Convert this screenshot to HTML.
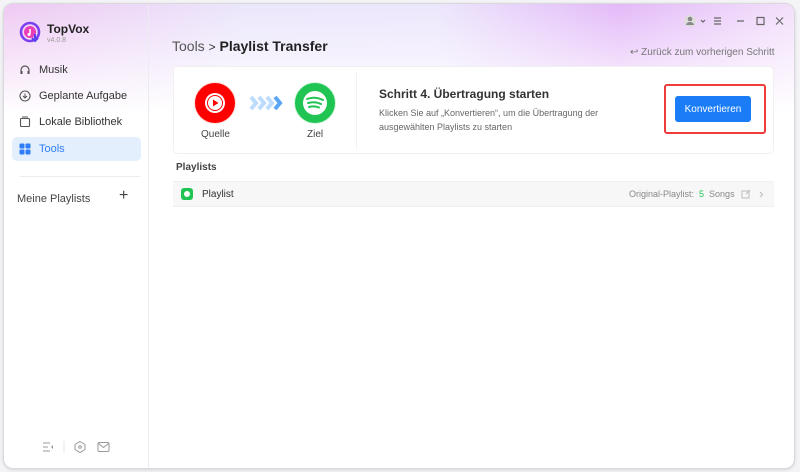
<!DOCTYPE html>
<html><head><meta charset="utf-8"><style>
*{box-sizing:border-box;margin:0;padding:0}
body{width:800px;height:472px;background:#f4f4f6;font-family:"Liberation Sans",Arial,sans-serif;position:relative;overflow:hidden}
.win{position:absolute;left:3px;top:3px;width:792px;height:466px;border-radius:10px;background:#fff;overflow:hidden;border:1px solid #d8d8de;box-shadow:0 1px 3px rgba(0,0,0,.12)}
.grad{position:absolute;left:0;top:0;width:100%;height:110px;background:linear-gradient(180deg,rgba(255,255,255,0) 0%,#fff 100%),linear-gradient(90deg,#efc9f3 0%,#ebe6fb 30%,#ece6fc 55%,#e3b9f8 78%,#f3e0fb 100%)}
.side{position:absolute;left:0;top:0;width:145px;height:100%;border-right:1px solid #ececf0}
.abs{position:absolute}
.nav{position:absolute;left:8px;width:129px;height:24px;font-size:11px;color:#333;display:flex;align-items:center;padding-left:7px}
.nav svg{margin-right:8px}
</style></head><body>
<div class="win">
<div class="grad"></div>
<div class="side">
 <svg class="abs" style="left:15px;top:16px" width="24" height="26" viewBox="0 0 24 26"><circle cx="11" cy="12" r="9" fill="none" stroke="#7b3ff2" stroke-width="2.6"/><circle cx="11" cy="12" r="6" fill="#e83fb8"/><path d="M11 9v5" stroke="#fff" stroke-width="1.5"/><circle cx="10" cy="14.5" r="1.5" fill="#fff"/><path d="M16 14v7m-3-3l3 3 3-3" stroke="#5b3ff2" stroke-width="2" fill="none"/></svg>
 <div class="abs" style="left:43px;top:18px;font-size:12px;font-weight:bold;color:#222">TopVox</div>
 <div class="abs" style="left:43px;top:33px;font-size:7px;color:#999">v4.0.8</div>
 <div class="nav" style="top:54px"><svg width="12" height="12" viewBox="0 0 12 12"><path d="M2 9V6a4 4 0 018 0v3" fill="none" stroke="#555" stroke-width="1.2"/><rect x="1.5" y="7" width="2" height="3" fill="#555"/><rect x="8.5" y="7" width="2" height="3" fill="#555"/></svg>Musik</div>
 <div class="nav" style="top:80px"><svg width="12" height="12" viewBox="0 0 12 12"><circle cx="6" cy="6" r="5" fill="none" stroke="#555" stroke-width="1.1"/><path d="M6 3.5v4M4 6l2 2 2-2" fill="none" stroke="#555" stroke-width="1"/></svg>Geplante Aufgabe</div>
 <div class="nav" style="top:106px"><svg width="12" height="12" viewBox="0 0 12 12"><rect x="1.5" y="2.5" width="9" height="8" rx="1" fill="none" stroke="#555" stroke-width="1.1"/><path d="M3 1h6" stroke="#555"/></svg>Lokale Bibliothek</div>
 <div class="nav" style="top:133px;background:#e3effd;border-radius:5px;color:#2f7df6"><svg width="12" height="12" viewBox="0 0 12 12" fill="#2f7df6"><rect x="0.5" y="0.5" width="5" height="5" rx="1"/><rect x="6.5" y="0.5" width="5" height="5" rx="1"/><rect x="0.5" y="6.5" width="5" height="5" rx="1"/><rect x="6.5" y="6.5" width="5" height="5" rx="1"/></svg>Tools</div>
 <div class="abs" style="left:16px;top:172px;width:120px;height:1px;background:#ececf0"></div>
 <div class="abs" style="left:13px;top:189px;font-size:11px;color:#444">Meine Playlists</div>
 <div class="abs" style="left:115px;top:183px;font-size:16px;color:#444">+</div>
 <svg class="abs" style="left:38px;top:436px" width="70" height="14" viewBox="0 0 70 14"><path d="M1 3h7M1 7h5M1 11h7" stroke="#999" stroke-width="1"/><path d="M11 5l-2 2 2 2z" fill="#999"/><path d="M22 1v12" stroke="#e5e5e5"/><path d="M38 1.5l5 3v5l-5 3-5-3v-5z" fill="none" stroke="#999" stroke-width="1"/><circle cx="38" cy="7" r="1.3" fill="none" stroke="#999"/><rect x="56" y="2.5" width="11" height="9" rx="1.5" fill="none" stroke="#999"/><path d="M56.5 3.5l5 4 5-4" fill="none" stroke="#999"/></svg>
</div>
<div class="abs" style="left:168px;top:34px;font-size:14px;color:#555">Tools <span style="color:#333;font-size:12px">&gt;</span> <b style="color:#222">Playlist Transfer</b></div>
<svg class="abs" style="left:680px;top:10px" width="106" height="14" viewBox="0 0 106 14"><circle cx="6" cy="7" r="6" fill="#ddd"/><circle cx="6" cy="5" r="2.3" fill="#888"/><path d="M2 11a4 3 0 018 0z" fill="#888"/><path d="M17 6l2 2 2-2M30 4h7M30 7h7M30 10h7M53 7h7M73 3.5h7v7h-7zM92 3.5l7 7M99 3.5l-7 7" fill="none" stroke="#666" stroke-width="1.2"/></svg>
<div class="abs" style="left:626px;top:43px;font-size:10px;color:#777">↩ Zurück zum vorherigen Schritt</div>
<div class="abs" style="left:169px;top:62px;width:601px;height:88px;border:1px solid #f0f0f3;border-radius:5px;background:#fff"></div>
<div class="abs" style="left:352px;top:69px;width:1px;height:76px;background:#f0f0f3"></div>
<svg class="abs" style="left:190px;top:78px" width="150" height="46" viewBox="0 0 150 46"><circle cx="21" cy="21" r="20.5" fill="#f00" stroke="#fdd" stroke-width="1"/><circle cx="21" cy="21" r="10" fill="#fff"/><circle cx="21" cy="21" r="7.5" fill="none" stroke="#f00" stroke-width="1"/><path d="M19 17.5v7l5.5-3.5z" fill="#f00"/><path d="M57 15l5 6-5 6M65 15l5 6-5 6M73 15l5 6-5 6" fill="none" stroke-width="4" stroke="#bcdcfb"/><path d="M81 15l5 6-5 6" fill="none" stroke-width="4" stroke="#5aa5f5"/><circle cx="121" cy="21" r="20.5" fill="#1fc452" stroke="#d7f5df"/><circle cx="121" cy="21" r="12" fill="#fff"/><path d="M113 17q8-3 16 1M114 21q7-2 13 1M115 25q5-1.5 10 0.5" fill="none" stroke="#1fc452" stroke-width="2" stroke-linecap="round"/></svg>
<div class="abs" style="left:197px;top:125px;font-size:10px;color:#444">Quelle</div>
<div class="abs" style="left:303px;top:125px;font-size:10px;color:#444">Ziel</div>
<div class="abs" style="left:375px;top:83px;font-size:12px;font-weight:bold;color:#333">Schritt 4. Übertragung starten</div>
<div class="abs" style="left:375px;top:102px;font-size:9px;color:#666;line-height:14px">Klicken Sie auf „Konvertieren“, um die Übertragung der<br>ausgewählten Playlists zu starten</div>
<div class="abs" style="left:660px;top:80px;width:102px;height:50px;border:2px solid #ee3b3b;border-radius:3px"></div>
<div class="abs" style="left:671px;top:92px;width:76px;height:26px;background:#1a7df7;border-radius:3px;color:#fff;font-size:10px;display:flex;align-items:center;justify-content:center">Konvertieren</div>
<div class="abs" style="left:172px;top:158px;font-size:10px;font-weight:bold;color:#444">Playlists</div>
<div class="abs" style="left:169px;top:177px;width:601px;height:26px;background:#f7f7f8;border-top:1px solid #f0f0f2;border-bottom:1px solid #f0f0f2"></div>
<div class="abs" style="left:177px;top:184px;width:12px;height:12px;border-radius:3px;background:#1fc452"><div style="margin:2px;width:8px;height:8px;border-radius:50%;background:#fff;border:1.5px solid #1fc452"></div></div>
<div class="abs" style="left:198px;top:185px;font-size:10px;color:#333">Playlist</div>
<div class="abs" style="left:625px;top:185px;font-size:9px;color:#888">Original-Playlist:&nbsp; <span style="color:#1fc452">5</span>&nbsp; Songs</div>
<svg class="abs" style="left:737px;top:185px" width="24" height="11" viewBox="0 0 24 11"><rect x="1" y="2" width="7" height="7" fill="none" stroke="#bbb"/><path d="M5 5l4-4" stroke="#bbb"/><path d="M19 3l2.5 2.5L19 8" fill="none" stroke="#bbb"/></svg>
</div>
</body></html>
